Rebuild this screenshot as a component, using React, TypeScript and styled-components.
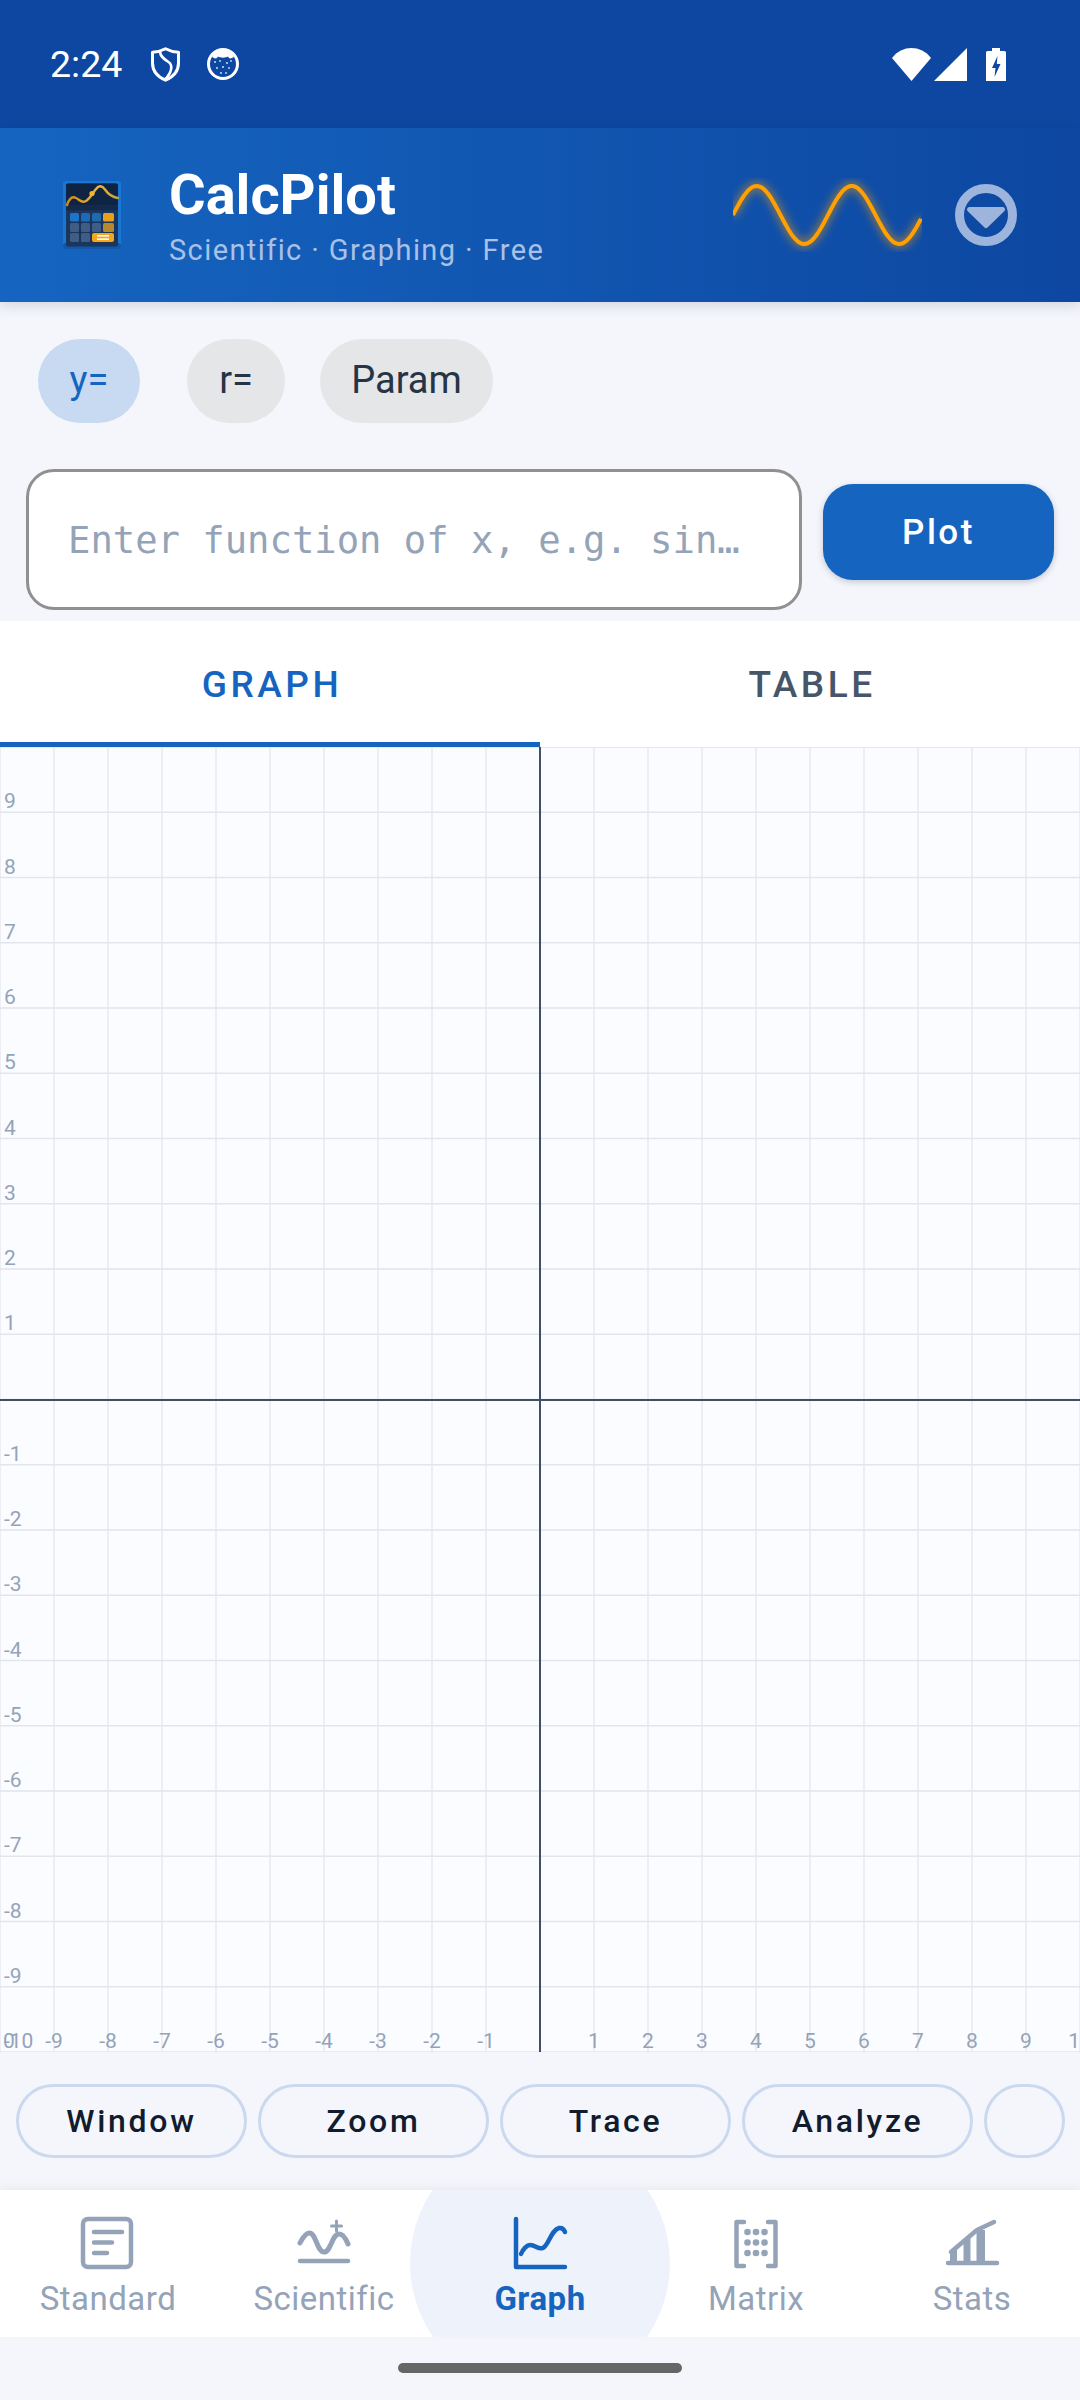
import React from "react";
import styled, { createGlobalStyle } from "styled-components";

const GlobalStyle = createGlobalStyle`
  html, body {
    margin: 0;
    padding: 0;
    background: #f4f6fb;
    font-family: Roboto, "Liberation Sans", sans-serif;
  }
  * {
    box-sizing: border-box;
  }
`;

const AXIS = Array.from({ length: 21 }, (_, i) => i - 10);
const CHART_W = 1080;
const CHART_H = 1305;
const STEP_X = CHART_W / 20;
const STEP_Y = CHART_H / 20;

const wavePath = () => {
  const pts: string[] = [];
  for (let x = 0; x <= 189; x += 2) {
    const y = 37 - 29 * Math.sin((2 * Math.PI * x) / 95);
    pts.push(`${x === 0 ? "M" : "L"}${x} ${y.toFixed(2)}`);
  }
  return pts.join(" ");
};

const ShieldIcon = () => (
  <svg width="29" height="35" viewBox="0 0 29 35" fill="none" stroke="#fff" strokeWidth="3" strokeLinejoin="round">
    <path d="M14.5 1.8C19 4.2 23 5.2 27.5 5.2V16C27.5 24 22 30 14.5 33.2C7 30 1.5 24 1.5 16V5.2C6 5.2 10 4.2 14.5 1.8Z" />
    <path d="M9 5C9.5 10 13.5 12.5 17.5 15C22 18 21 25 14.5 32" strokeWidth="2.6" />
  </svg>
);

const FaceIcon = () => (
  <svg width="32" height="32" viewBox="0 0 32 32">
    <circle cx="16" cy="16" r="14.5" fill="none" stroke="#fff" strokeWidth="3" />
    <path d="M5 9C8 11 10 11 11 8.5C13 10 19 10 21 8.5C22 11 24 11 27 9C24 3 20 1 16 1C12 1 8 3 5 9Z" fill="#fff" />
    <g fill="#cfdcf1">
      <circle cx="8" cy="14" r="1" />
      <circle cx="13" cy="13" r="0.9" />
      <circle cx="20" cy="15" r="1" />
      <circle cx="24" cy="13" r="0.9" />
      <circle cx="10" cy="20" r="1" />
      <circle cx="16" cy="19" r="1" />
      <circle cx="22" cy="20" r="0.9" />
      <circle cx="14" cy="25" r="1" />
      <circle cx="19" cy="25" r="0.9" />
    </g>
  </svg>
);

const WifiIcon = () => (
  <svg width="39" height="33" viewBox="0 0 39 33">
    <path d="M0 10C10 -3.3 29 -3.3 39 10L19.5 33Z" fill="#fff" />
  </svg>
);

const SignalIcon = () => (
  <svg width="33" height="33" viewBox="0 0 33 33">
    <path d="M33 0V33H0Z" fill="#fff" />
  </svg>
);

const BatteryIcon = () => (
  <svg width="20" height="33" viewBox="0 0 20 33">
    <path d="M6 0H14V3H18.5Q20 3 20 4.5V33H0V4.5Q0 3 1.5 3H6Z" fill="#fff" />
    <path d="M11.5 8L6 20H9.5L8.5 29L14.5 16H10.8Z" fill="#0d47a1" />
  </svg>
);

const LogoIcon = () => (
  <svg width="58" height="68" viewBox="0 0 58 68">
    <defs>
      <linearGradient id="logoWave" x1="0" x2="1" y1="0" y2="0">
        <stop offset="0" stopColor="#c98a1c" />
        <stop offset="0.6" stopColor="#f7b52c" />
        <stop offset="1" stopColor="#b9a24e" />
      </linearGradient>
    </defs>
    <rect width="58" height="68" rx="3" fill="#1976d2" />
    <rect y="62" width="58" height="6" rx="3" fill="#1257a8" />
    <rect x="3" y="2.5" width="52" height="63" rx="2" fill="#1a365d" />
    <rect x="3" y="2.5" width="52" height="22" rx="2" fill="#0f2342" />
    <rect x="3" y="24.5" width="52" height="5" fill="#142a4a" />
    <path d="M4 24C6 18 9 15.5 12 16.5C16 18 18 22 22 20.5C26 19 29 13 33 8C36 4 39 4.5 42 8.5C45 13 49 16 55 17" fill="none" stroke="url(#logoWave)" strokeWidth="2.4" strokeLinecap="round" />
    <circle cx="29" cy="12.5" r="2.6" fill="#f7b52c" />
    <rect x="7" y="32" width="9" height="8.5" rx="1.5" fill="#1e74c8" />
    <rect x="18" y="32" width="9" height="8.5" rx="1.5" fill="#1e6aba" />
    <rect x="29" y="32" width="9" height="8.5" rx="1.5" fill="#1e6ab0" />
    <rect x="40" y="32" width="11" height="8.5" rx="1.5" fill="#e8a01a" />
    <rect x="7" y="42" width="9" height="9" rx="1.5" fill="#3f5d85" />
    <rect x="18" y="42" width="9" height="9" rx="1.5" fill="#3f5d85" />
    <rect x="29" y="42" width="9" height="9" rx="1.5" fill="#3f5d85" />
    <rect x="40" y="42" width="11" height="9" rx="1.5" fill="#b58a2e" />
    <rect x="7" y="52" width="9" height="9" rx="1.5" fill="#3f5d85" />
    <rect x="18" y="52" width="9" height="9" rx="1.5" fill="#3f5d85" />
    <rect x="29" y="52" width="22" height="9" rx="2" fill="#f9a51a" />
    <rect x="34" y="54" width="12" height="1.6" fill="#fff" />
    <rect x="34" y="57.4" width="12" height="1.6" fill="#fff" />
  </svg>
);

const WaveIcon = () => (
  <svg width="189" height="74" viewBox="0 0 189 74">
    <defs>
      <filter id="glow" x="-10%" y="-30%" width="120%" height="160%">
        <feGaussianBlur stdDeviation="4" />
      </filter>
    </defs>
    <path d={wavePath()} fill="none" stroke="#ffa000" strokeOpacity="0.5" strokeWidth="8" filter="url(#glow)" />
    <path d={wavePath()} fill="none" stroke="#ffa000" strokeWidth="4" />
  </svg>
);

const DropIcon = () => (
  <svg width="62" height="62" viewBox="0 0 62 62">
    <circle cx="31" cy="31" r="26.5" fill="none" stroke="#9db4dc" strokeWidth="9" />
    <path d="M14.5 25.5H47.5L31 41.5Z" fill="#9db4dc" stroke="#9db4dc" strokeWidth="5" strokeLinejoin="round" />
  </svg>
);

const NavSvg: React.FC<{ children: React.ReactNode }> = ({ children }) => (
  <svg width="60" height="60" viewBox="0 0 60 60" fill="none" stroke="currentColor" strokeWidth="4.5" strokeLinecap="round" strokeLinejoin="round">
    {children}
  </svg>
);

const StandardIcon = () => (
  <NavSvg>
    <rect x="5" y="6" width="48" height="48" rx="5" />
    <path d="M16 19H44M16 29.5H34M16 40H29" />
  </NavSvg>
);

const ScientificIcon = () => (
  <NavSvg>
    <path d="M6 30C9 24 12 20 15.5 20C22 20 23 39 30 39C37 39 38 21 45 21C49 21 52 26 54 31" strokeWidth="5" />
    <path d="M6 48H54" />
    <path d="M42.5 8V18M37.5 13H47.5" strokeWidth="3" />
  </NavSvg>
);

const GraphIcon = () => (
  <NavSvg>
    <path d="M6 6V54H55" />
    <path d="M11 41C13 36 17 32 20 32C26 32 28 37 33 35C39 32 41 17 49 15C52 14.5 54 16 55 19" />
  </NavSvg>
);

const MatrixIcon = () => (
  <NavSvg>
    <path d="M18 9H10.5V53H18M42 9H49.5V53H42" />
    <g fill="currentColor" stroke="none">
      {[19, 29.5, 40].map((cy) =>
        [21.5, 30, 38.5].map((cx) => <circle key={`${cx}-${cy}`} cx={cx} cy={cy} r="3.3" />)
      )}
    </g>
  </NavSvg>
);

const StatsIcon = () => (
  <NavSvg>
    <path d="M6 50H55" />
    <path d="M9 39L35 17L52 9" />
    <g fill="currentColor" stroke="none">
      <path d="M8 38L15 34V50H8Z" />
      <path d="M21.5 29L28.5 22V50H21.5Z" />
      <path d="M34.5 17H43V50H34.5Z" />
    </g>
  </NavSvg>
);

const navItems = [
  { label: "Standard", icon: <StandardIcon /> },
  { label: "Scientific", icon: <ScientificIcon /> },
  { label: "Graph", icon: <GraphIcon />, active: true },
  { label: "Matrix", icon: <MatrixIcon /> },
  { label: "Stats", icon: <StatsIcon /> },
];

const App: React.FC = () => {
  return (
    <Page>
      <GlobalStyle />
      <StatusBar>
        <StatusLeft>
          <Time>2:24</Time>
          <ShieldIcon />
          <FaceIcon />
        </StatusLeft>
        <StatusRight>
          <WifiIcon />
          <SignalIcon />
          <BatteryGap>
            <BatteryIcon />
          </BatteryGap>
        </StatusRight>
      </StatusBar>
      <Header>
        <LogoBox>
          <LogoIcon />
        </LogoBox>
        <Titles>
          <Title>CalcPilot</Title>
          <Subtitle>Scientific · Graphing · Free</Subtitle>
        </Titles>
        <WaveBox>
          <WaveIcon />
        </WaveBox>
        <DropBox>
          <DropIcon />
        </DropBox>
      </Header>
      <Modes>
        <Chip $active $width={102}>y=</Chip>
        <Chip $width={98}>r=</Chip>
        <Chip $width={173}>Param</Chip>
      </Modes>
      <InputRow>
        <FunctionInput placeholder="Enter function of x, e.g. sin…" readOnly />
        <PlotButton>Plot</PlotButton>
      </InputRow>
      <Tabs>
        <Tab $active>GRAPH</Tab>
        <Tab>TABLE</Tab>
      </Tabs>
      <Chart>
        <svg width={CHART_W} height={CHART_H} viewBox={`0 0 ${CHART_W} ${CHART_H}`}>
          {AXIS.map((v) => (
            <line
              key={`v${v}`}
              x1={(v + 10) * STEP_X}
              x2={(v + 10) * STEP_X}
              y1={0}
              y2={CHART_H}
              stroke="#eceef3"
              strokeWidth="2"
            />
          ))}
          {AXIS.map((v) => (
            <line
              key={`h${v}`}
              x1={0}
              x2={CHART_W}
              y1={(10 - v) * STEP_Y}
              y2={(10 - v) * STEP_Y}
              stroke="#e2e5ec"
              strokeWidth="1.5"
            />
          ))}
          <line x1={540} x2={540} y1={0} y2={CHART_H} stroke="#3f4f66" strokeWidth="2" />
          <line x1={0} x2={CHART_W} y1={653} y2={653} stroke="#3f4f66" strokeWidth="2" />
          {AXIS.filter((v) => v !== 0).map((v) => (
            <ChartLabel key={`x${v}`} x={(v + 10) * STEP_X} y={CHART_H - 4} textAnchor="middle">
              {v}
            </ChartLabel>
          ))}
          {AXIS.filter((v) => v !== 0).map((v) => (
            <ChartLabel key={`y${v}`} x={4} y={(10 - v) * STEP_Y - 4}>
              {v}
            </ChartLabel>
          ))}
        </svg>
      </Chart>
      <Toolbar>
        <ToolButton>Window</ToolButton>
        <ToolButton>Zoom</ToolButton>
        <ToolButton>Trace</ToolButton>
        <ToolButton>Analyze</ToolButton>
        <ToolButton $small />
      </Toolbar>
      <BottomNav>
        {navItems.map((item) => (
          <NavItem key={item.label} $active={item.active}>
            {item.active && <ActiveBlob />}
            <NavIcon>{item.icon}</NavIcon>
            <NavLabel $active={item.active}>{item.label}</NavLabel>
          </NavItem>
        ))}
      </BottomNav>
      <Gesture>
        <HomeBar />
      </Gesture>
    </Page>
  );
};

export default App;

const Page = styled.div`
  width: 1080px;
  height: 2400px;
  display: flex;
  flex-direction: column;
  overflow: hidden;
  background: #f4f6fb;
`;

const StatusBar = styled.div`
  height: 128px;
  flex: none;
  background: #0d47a1;
  display: flex;
  align-items: center;
  justify-content: space-between;
  padding: 0 74px 0 50px;
  color: #fff;
`;

const StatusLeft = styled.div`
  display: flex;
  align-items: center;
  svg + svg {
    margin-left: 27px;
  }
`;

const Time = styled.span`
  font-size: 37.5px;
  width: 101px;
  padding-top: 2px;
  line-height: 1;
`;

const StatusRight = styled.div`
  display: flex;
  align-items: center;
  gap: 3px;
`;

const BatteryGap = styled.div`
  display: flex;
  margin-left: 16px;
`;

const Header = styled.div`
  height: 174px;
  flex: none;
  position: relative;
  z-index: 2;
  display: flex;
  align-items: center;
  padding-left: 63px;
  background: linear-gradient(90deg, #1565c0, #0d47a1);
  box-shadow: 0 4px 12px rgba(15, 30, 60, 0.14);
`;

const LogoBox = styled.div`
  display: flex;
  width: 106px;
`;

const Titles = styled.div`
  width: 564px;
  display: flex;
  flex-direction: column;
`;

const Title = styled.div`
  font-size: 56px;
  font-weight: 700;
  line-height: 64px;
  color: #fff;
`;

const Subtitle = styled.div`
  margin-top: 5px;
  font-size: 29px;
  line-height: 36px;
  letter-spacing: 1.4px;
  color: #a9c1e6;
`;

const WaveBox = styled.div`
  display: flex;
  width: 222px;
`;

const DropBox = styled.div`
  display: flex;
`;

const Modes = styled.div`
  height: 167px;
  flex: none;
  padding: 37px 0 0 38px;
  display: flex;
  align-items: flex-start;
  gap: 47px;
  & > :nth-child(3) {
    margin-left: -12px;
  }
`;

const Chip = styled.div<{ $active?: boolean; $width: number }>`
  width: ${(p) => p.$width}px;
  height: 84px;
  padding-bottom: 3px;
  border-radius: 42px;
  display: flex;
  align-items: center;
  justify-content: center;
  font-size: 38px;
  background: ${(p) => (p.$active ? "#c7daf1" : "#e5e6e8")};
  color: ${(p) => (p.$active ? "#1565c0" : "#263445")};
`;

const InputRow = styled.div`
  height: 152px;
  flex: none;
  padding: 0 26px 11px 26px;
  display: flex;
  align-items: center;
  gap: 21px;
`;

const FunctionInput = styled.input`
  width: 776px;
  height: 141px;
  border: 3px solid #909090;
  border-radius: 28px;
  background: #fff;
  padding: 0 39px;
  outline: 0;
  font-family: "DejaVu Sans Mono", "Liberation Mono", monospace;
  font-size: 37.2px;
  &::placeholder {
    color: #94a3b8;
    opacity: 1;
  }
`;

const PlotButton = styled.button`
  width: 231px;
  height: 96px;
  margin-bottom: 15px;
  border: 0;
  border-radius: 30px;
  background: #1565c0;
  color: #fff;
  font-family: Roboto, sans-serif;
  font-size: 35px;
  font-weight: 500;
  letter-spacing: 2.5px;
  box-shadow: 0 2px 6px rgba(15, 30, 60, 0.22);
`;

const Tabs = styled.div`
  height: 126px;
  flex: none;
  display: flex;
  background: #fff;
`;

const Tab = styled.div<{ $active?: boolean }>`
  flex: 1;
  display: flex;
  align-items: center;
  justify-content: center;
  padding: 5px 0 0 4px;
  font-size: 37px;
  font-weight: 500;
  letter-spacing: 3.5px;
  color: ${(p) => (p.$active ? "#1565c0" : "#475569")};
  border-bottom: 5px solid ${(p) => (p.$active ? "#1565c0" : "transparent")};
`;

const Chart = styled.div`
  height: ${CHART_H}px;
  flex: none;
  background: #fbfcff;
  svg {
    display: block;
  }
`;

const ChartLabel = styled.text`
  font-family: Roboto, sans-serif;
  font-size: 21px;
  fill: #94a3b8;
`;

const Toolbar = styled.div`
  height: 138px;
  flex: none;
  padding: 32px 0 0 16px;
  display: flex;
  align-items: flex-start;
  gap: 11px;
  background: #f5f6fb;
`;

const ToolButton = styled.button<{ $small?: boolean }>`
  width: ${(p) => (p.$small ? 81 : 231)}px;
  height: 74px;
  flex: none;
  border: 3px solid #cbd9f0;
  border-radius: 37px;
  background: transparent;
  color: #111c2e;
  font-family: Roboto, sans-serif;
  font-size: 32px;
  font-weight: 500;
  letter-spacing: 2.7px;
`;

const BottomNav = styled.div`
  height: 147px;
  flex: none;
  position: relative;
  z-index: 1;
  overflow: hidden;
  display: flex;
  background: #fff;
  box-shadow: 0 -3px 8px rgba(15, 30, 60, 0.05);
`;

const NavItem = styled.div<{ $active?: boolean }>`
  flex: 1;
  position: relative;
  display: flex;
  flex-direction: column;
  align-items: center;
  padding-top: 23px;
  color: ${(p) => (p.$active ? "#1565c0" : "#94a3b8")};
`;

const ActiveBlob = styled.div`
  position: absolute;
  left: -22px;
  top: -57px;
  width: 260px;
  height: 260px;
  border-radius: 50%;
  background: #eef3fb;
`;

const NavIcon = styled.div`
  position: relative;
  display: flex;
  height: 60px;
`;

const NavLabel = styled.div<{ $active?: boolean }>`
  position: relative;
  margin-top: 6px;
  font-size: 33px;
  line-height: 40px;
  letter-spacing: 0.5px;
  font-weight: ${(p) => (p.$active ? 700 : 400)};
`;

const Gesture = styled.div`
  flex: 1;
  display: flex;
  justify-content: center;
  padding-top: 26px;
  background: #f4f6fb;
`;

const HomeBar = styled.div`
  width: 284px;
  height: 10px;
  border-radius: 5px;
  background: #666;
`;
